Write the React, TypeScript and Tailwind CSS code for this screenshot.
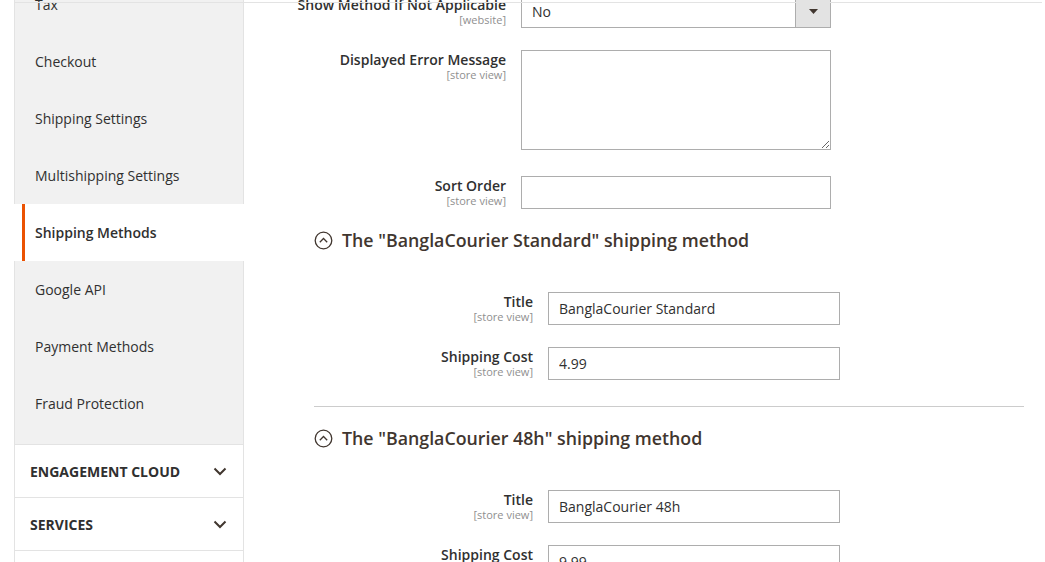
const topItems = ["Tax", "Checkout", "Shipping Settings", "Multishipping Settings"];
const bottomItems = ["Google API", "Payment Methods", "Fraud Protection"];
const sections = ["Engagement Cloud", "Services", ""];

function Chevron() {
  return (
    <svg width="14" height="9" viewBox="0 0 14 9" fill="none">
      <path d="M1.5 1.5 L7 7 L12.5 1.5" stroke="#41362f" strokeWidth="2" />
    </svg>
  );
}

function CircleUp() {
  return (
    <svg width="19" height="19" viewBox="0 0 19 19" fill="none">
      <circle cx="9.5" cy="9.5" r="8.3" stroke="#41362f" strokeWidth="1.3" />
      <path d="M5.8 11.2 L9.5 7.5 L13.2 11.2" stroke="#41362f" strokeWidth="1.3" />
    </svg>
  );
}

function Sidebar() {
  return (
    <aside className="w-[230px] ml-[14px] shrink-0 -mt-[24px] text-[14px] text-[#303030]">
      <div className="bg-[#f1f1f1] border-x border-[#e3e3e3]">
        {topItems.map((t) => (
          <div key={t} className="h-[57px] flex items-center pl-[20px]">
            {t}
          </div>
        ))}
      </div>
      <div className="ml-[8px] w-[222px] h-[57px] bg-white border-l-[3px] border-[#eb5202] flex items-center pl-[10px] font-semibold">
        Shipping Methods
      </div>
      <div className="bg-[#f1f1f1] border-x border-[#e3e3e3] pb-[12px]">
        {bottomItems.map((t) => (
          <div key={t} className="h-[57px] flex items-center pl-[20px]">
            {t}
          </div>
        ))}
      </div>
      <div className="border-x border-t border-[#e3e3e3]">
        {sections.map((s, i) => (
          <div
            key={i}
            className="h-[53px] border-b border-[#e3e3e3] flex items-center justify-between pl-[15px] pr-[16px]"
          >
            <span className="font-bold uppercase">{s}</span>
            {s && <Chevron />}
          </div>
        ))}
      </div>
    </aside>
  );
}

function Label({ text, scope, width }: { text: string; scope: string; width: string }) {
  return (
    <div className={`${width} shrink-0 text-right`}>
      <div className="text-[14px] leading-[19px] font-semibold text-[#303030]">{text}</div>
      <div className="text-[11px] leading-[12px] text-[#8f8f8f]">[{scope}]</div>
    </div>
  );
}

function TextInput({ value, width }: { value: string; width: string }) {
  return (
    <input
      readOnly
      value={value}
      className={`${width} h-[33px] border border-[#adadad] bg-white px-[10px] text-[14px] text-[#303030] outline-none`}
    />
  );
}

function MethodHeading({ name }: { name: string }) {
  return (
    <div className="ml-[70px] h-[24px] flex items-center gap-[9px] text-[17.8px] font-semibold text-[#41362f]">
      <CircleUp />
      <span>The "{name}" shipping method</span>
    </div>
  );
}

function MethodFields({ title, cost }: { title: string; cost: string }) {
  return (
    <>
      <div className="flex mt-[40px]">
        <Label text="Title" scope="store view" width="w-[289px]" />
        <div className="ml-[15px]">
          <TextInput value={title} width="w-[292px]" />
        </div>
      </div>
      <div className="flex mt-[22px]">
        <Label text="Shipping Cost" scope="store view" width="w-[289px]" />
        <div className="ml-[15px]">
          <TextInput value={cost} width="w-[292px]" />
        </div>
      </div>
    </>
  );
}

export default function App() {
  return (
    <div className="relative w-[1045px] h-[562px] overflow-hidden bg-white font-['Open_Sans',sans-serif]">
      <div className="flex">
        <Sidebar />
        <main className="flex-1 -mt-[5px]">
          <div className="flex">
            <Label text="Show Method If Not Applicable" scope="website" width="w-[262px]" />
            <div className="ml-[15px] w-[310px] h-[33px] border border-[#adadad] flex">
              <div className="flex-1 flex items-center pl-[10px] text-[14px] text-[#303030]">No</div>
              <div className="w-[35px] bg-[#e3e3e3] border-l border-[#adadad] flex items-center justify-center">
                <svg width="9" height="5" viewBox="0 0 9 5">
                  <path d="M0 0 H9 L4.5 5 Z" fill="#41362f" />
                </svg>
              </div>
            </div>
          </div>
          <div className="flex mt-[22px]">
            <Label text="Displayed Error Message" scope="store view" width="w-[262px]" />
            <textarea readOnly className="ml-[15px] w-[310px] h-[100px] border border-[#adadad] outline-none" />
          </div>
          <div className="flex mt-[26px]">
            <Label text="Sort Order" scope="store view" width="w-[262px]" />
            <div className="ml-[15px]">
              <TextInput value="" width="w-[310px]" />
            </div>
          </div>
          <div className="mt-[19px]">
            <MethodHeading name="BanglaCourier Standard" />
          </div>
          <MethodFields title="BanglaCourier Standard" cost="4.99" />
          <div className="ml-[70px] w-[710px] h-px bg-[#cccccc] mt-[26px]" />
          <div className="mt-[19px]">
            <MethodHeading name="BanglaCourier 48h" />
          </div>
          <MethodFields title="BanglaCourier 48h" cost="9.99" />
        </main>
      </div>
      <div className="absolute top-[2px] left-[14px] right-[3px] h-px bg-[#e3e3e3]" />
    </div>
  );
}
